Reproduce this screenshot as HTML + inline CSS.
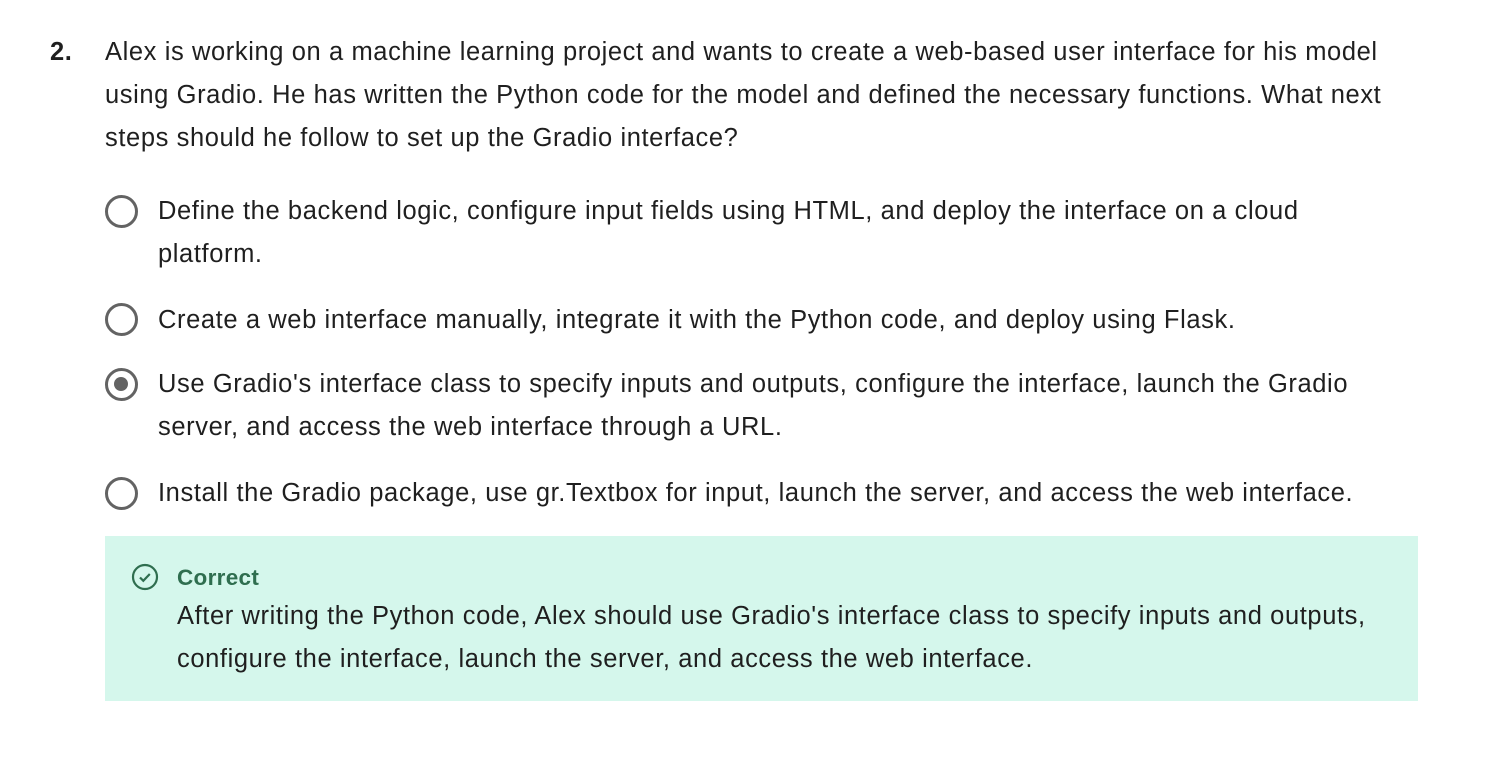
<!DOCTYPE html>
<html><head><style>
body{margin:0;background:#fff;font-family:"Liberation Sans",sans-serif;color:#1f1f1f;width:1494px;height:766px;overflow:hidden;position:relative}
.t{position:absolute;font-size:25.5px;letter-spacing:0.6px;line-height:43px;white-space:nowrap}
.r{position:absolute;width:33px;height:33px;border:3.5px solid #636363;border-radius:50%;box-sizing:border-box}
.r.on::after{content:"";position:absolute;left:6px;top:6px;width:14px;height:14px;border-radius:50%;background:#636363}
.box{position:absolute;left:105px;top:536px;width:1313px;height:165px;background:#d5f7ec}
</style></head><body>
<div class="t" style="left:50px;top:31px;font-weight:bold">2.</div>
<div class="t" style="left:105px;top:31px">Alex is working on a machine learning project and wants to create a web-based user interface for his model<br>using Gradio. He has written the Python code for the model and defined the necessary functions. What next<br>steps should he follow to set up the Gradio interface?</div>
<div class="r" style="left:105px;top:195px"></div>
<div class="t" style="left:158px;top:190px">Define the backend logic, configure input fields using HTML, and deploy the interface on a cloud<br>platform.</div>
<div class="r" style="left:105px;top:303px"></div>
<div class="t" style="left:158px;top:299px">Create a web interface manually, integrate it with the Python code, and deploy using Flask.</div>
<div class="r on" style="left:105px;top:368px"></div>
<div class="t" style="left:158px;top:363px">Use Gradio's interface class to specify inputs and outputs, configure the interface, launch the Gradio<br>server, and access the web interface through a URL.</div>
<div class="r" style="left:105px;top:477px"></div>
<div class="t" style="left:158px;top:472px">Install the Gradio package, use gr.Textbox for input, launch the server, and access the web interface.</div>
<div class="box"></div>
<svg style="position:absolute;left:131px;top:563px" width="28" height="28" viewBox="0 0 28 28"><circle cx="14" cy="14" r="12" fill="none" stroke="#2f6e4f" stroke-width="2.2"/><path d="M9 14.5l3.3 3.3 6.5-6.8" fill="none" stroke="#2f6e4f" stroke-width="2.2"/></svg>
<div class="t" style="left:177px;top:556px;font-weight:bold;color:#2f6e4f;font-size:22.5px;letter-spacing:0.3px">Correct</div>
<div class="t" style="left:177px;top:595px">After writing the Python code, Alex should use Gradio's interface class to specify inputs and outputs,<br>configure the interface, launch the server, and access the web interface.</div>
</body></html>
